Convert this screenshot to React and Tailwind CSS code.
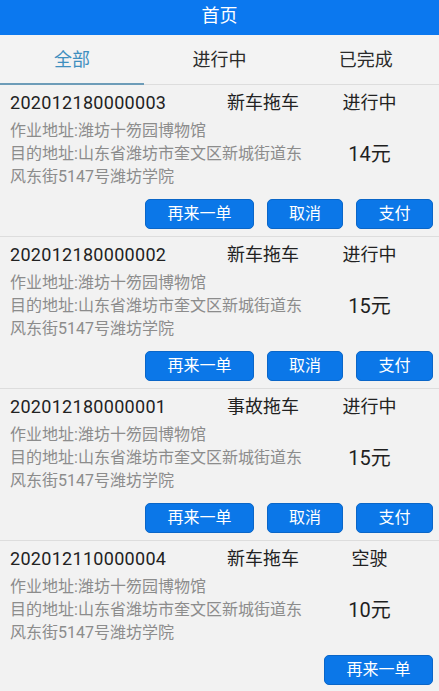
const orders = [
  { no: '202012180000003', type: '新车拖车', status: '进行中', price: '14元', actions: ['再来一单', '取消', '支付'] },
  { no: '202012180000002', type: '新车拖车', status: '进行中', price: '15元', actions: ['再来一单', '取消', '支付'] },
  { no: '202012180000001', type: '事故拖车', status: '进行中', price: '15元', actions: ['再来一单', '取消', '支付'] },
  { no: '202012110000004', type: '新车拖车', status: '空驶', price: '10元', actions: ['再来一单'] },
];

const btnWidth = { 再来一单: 'w-[109px]', 取消: 'w-[76px]', 支付: 'w-[77px]' };

function OrderCard({ order }) {
  return (
    <div className="border-b-[1.5px] border-[#dddddd] h-[152px]">
      <div className="flex items-center h-[34px] text-[18px] text-[#222]">
        <span className="pl-[10px] w-[215px] tracking-[0.3px]">{order.no}</span>
        <span className="w-[96px] text-center">{order.type}</span>
        <span className="flex-1 text-center pr-[11px]">{order.status}</span>
      </div>
      <div className="flex">
        <p className="pl-[10px] w-[310px] text-[16px] leading-[23px] text-[#8c8c8c]">
          作业地址:潍坊十笏园博物馆
          <br />
          目的地址:山东省潍坊市奎文区新城街道东风东街5147号潍坊学院
        </p>
        <div className="flex-1 flex items-center justify-center pr-[10px] text-[20px] text-[#1f1f1f]">
          {order.price}
        </div>
      </div>
      <div className="flex justify-end gap-[13px] pr-[6px] mt-[11px]">
        {order.actions.map((a) => (
          <button
            key={a}
            className={`${btnWidth[a]} h-[30px] rounded-[5px] bg-[#0b77e8] border border-[#0a66c8] text-white text-[16px] leading-none`}
          >
            {a}
          </button>
        ))}
      </div>
    </div>
  );
}

export default function App() {
  return (
    <div
      className="w-[439px] h-[691px] overflow-hidden bg-[#f2f2f2]"
      style={{ fontFamily: 'Roboto, "Noto Sans CJK SC", sans-serif' }}
    >
      <div className="h-[35px] bg-[#0b78ef] text-white text-[18px] text-center leading-[31px]">首页</div>
      <div className="grid grid-cols-3 h-[50px] border-b border-[#dddddd] text-[18px] bg-[#f3f3f3]">
        <div className="flex items-center justify-center text-[#3f8fbf] border-b-2 border-[#6d9cb8] -mb-px w-[144px]">全部</div>
        <div className="flex items-center justify-center text-[#2a2a2a]">进行中</div>
        <div className="flex items-center justify-center text-[#2a2a2a]">已完成</div>
      </div>
      {orders.map((o) => (
        <OrderCard key={o.no} order={o} />
      ))}
    </div>
  );
}
